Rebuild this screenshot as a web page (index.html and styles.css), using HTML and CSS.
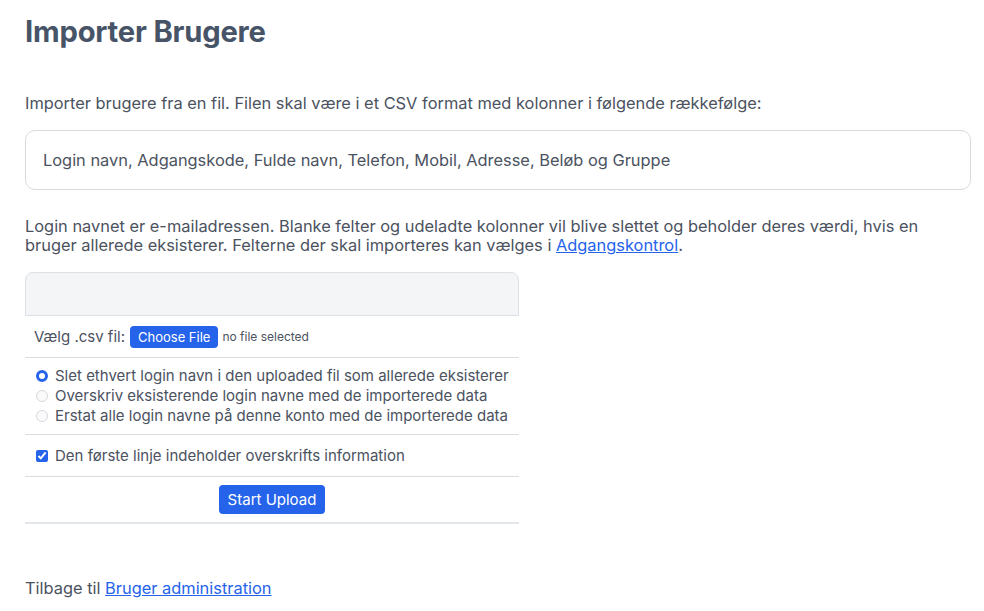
FILE: index.html
```html
<!DOCTYPE html>
<html lang="da">
<head>
<meta charset="utf-8">
<title>Importer Brugere</title>
<link rel="stylesheet" href="styles.css">
</head>
<body>
<main class="page">
  <h1 class="title">Importer Brugere</h1>
  <p class="intro">Importer brugere fra en fil. Filen skal være i et CSV format med kolonner i følgende rækkefølge:</p>
  <div class="columns">Login navn, Adgangskode, Fulde navn, Telefon, Mobil, Adresse, Beløb og Gruppe</div>
  <p class="note">Login navnet er e-mailadressen. Blanke felter og udeladte kolonner vil blive slettet og beholder deres værdi, hvis en bruger allerede eksisterer. Felterne der skal importeres kan vælges i <a href="#">Adgangskontrol</a>.</p>
  <form class="upload">
    <div class="upload-head"></div>
    <div class="row file-row">
      <span class="file-label">Vælg .csv fil:</span>
      <span class="file-btn">Choose File</span>
      <span class="file-none">no file selected</span>
    </div>
    <div class="row options">
      <label class="opt"><input type="radio" name="mode" checked><span>Slet ethvert login navn i den uploaded fil som allerede eksisterer</span></label>
      <label class="opt"><input type="radio" name="mode"><span>Overskriv eksisterende login navne med de importerede data</span></label>
      <label class="opt"><input type="radio" name="mode"><span>Erstat alle login navne på denne konto med de importerede data</span></label>
    </div>
    <div class="row check-row">
      <label class="opt"><input type="checkbox" checked><span>Den første linje indeholder overskrifts information</span></label>
    </div>
    <div class="row submit-row">
      <button type="button" class="submit">Start Upload</button>
    </div>
  </form>
  <p class="back">Tilbage til <a href="#">Bruger administration</a></p>
</main>
</body>
</html>
```
FILE: styles.css
```css
html, body {
  margin: 0;
  padding: 0;
  background: #ffffff;
}
body {
  font-family: Inter, "Noto Sans", "Liberation Sans", sans-serif;
  color: #4b5260;
  font-size: 16.4px;
}
.page {
  padding: 14px 13px 0 25px;
}
.title {
  margin: 0;
  font-size: 29.2px;
  font-weight: 700;
  color: #475467;
  line-height: 36px;
  letter-spacing: -0.2px;
}
.intro {
  margin: 42px 0 0;
  line-height: 22px;
}
a {
  color: #2563eb;
  text-decoration: underline;
}
.columns {
  margin-top: 16px;
  border: 1px solid #d7dbe0;
  border-radius: 10px;
  height: 58px;
  display: flex;
  align-items: center;
  padding: 0 17px;
}
.note {
  margin: 27px 0 0;
  line-height: 19px;
  max-width: 920px;
}
.upload {
  margin-top: 17px;
  width: 494px;
}
.upload-head {
  height: 42px;
  background: #f3f5f7;
  border: 1px solid #dde1e6;
  border-radius: 8px 8px 0 0;
}
.row {
  border-bottom: 1px solid #d9dde2;
}
.file-row {
  height: 41px;
  display: flex;
  align-items: center;
  padding-left: 9px;
  font-size: 15px;
}
.file-btn {
  margin-left: 5px;
  background: #2563eb;
  color: #fff;
  font-size: 13px;
  border-radius: 4px;
  height: 22px;
  line-height: 22px;
  padding: 0 8px;
}
.file-none {
  margin-left: 4px;
  font-size: 12px;
}
.options {
  padding: 8px 0 8px 11px;
  display: flex;
  flex-direction: column;
}
.opt {
  display: flex;
  align-items: center;
  font-size: 15px;
  line-height: 20px;
}
.opt input {
  margin: 0 7px 0 0;
  width: 12px;
  height: 12px;
  accent-color: #2563eb;
}
.opt input[type="radio"] {
  appearance: none;
  -webkit-appearance: none;
  border: 1px solid #d5d9de;
  border-radius: 50%;
  background: #fafafa;
  box-sizing: border-box;
}
.opt input[type="radio"]:checked {
  background: #fff;
  border: 3.5px solid #2563eb;
}
.check-row {
  height: 41px;
  display: flex;
  align-items: center;
  padding-left: 11px;
}
.submit-row {
  height: 45px;
  display: flex;
  align-items: center;
  justify-content: center;
  border-bottom: 2px solid #e3e6ea;
}
.submit {
  background: #2563eb;
  color: #fff;
  font-family: inherit;
  font-size: 15px;
  border: none;
  border-radius: 4px;
  width: 106px;
  height: 29px;
  padding: 0;
}
.back {
  margin: 53px 0 0;
  line-height: 22px;
}
```
